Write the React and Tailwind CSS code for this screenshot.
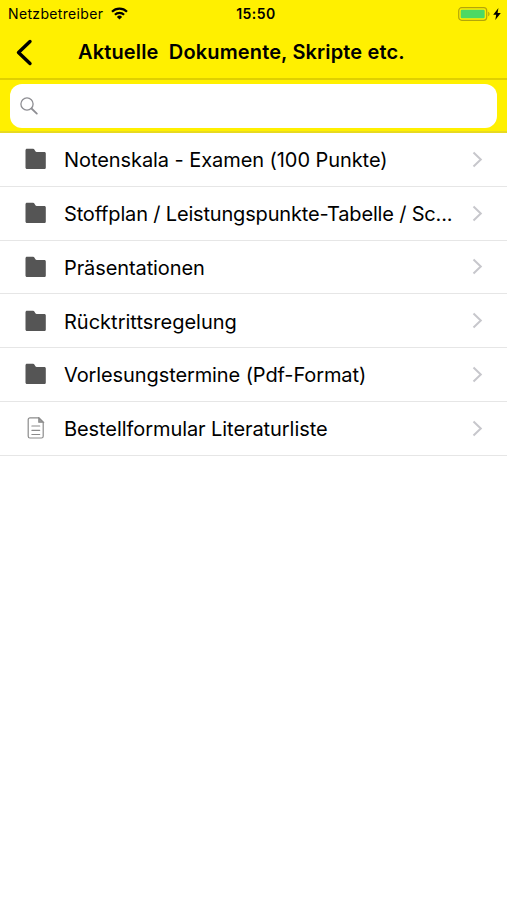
import React from 'react';

const entries = [
  { id: 1, type: 'folder', title: 'Notenskala - Examen (100 Punkte)', tracking: 'tracking-[-0.07px]' },
  { id: 2, type: 'folder', title: 'Stoffplan / Leistungspunkte-Tabelle / Sc...', tracking: 'tracking-[-0.17px]' },
  { id: 3, type: 'folder', title: 'Präsentationen', tracking: 'tracking-[-0.1px]' },
  { id: 4, type: 'folder', title: 'Rücktrittsregelung', tracking: 'tracking-[0px]' },
  { id: 5, type: 'folder', title: 'Vorlesungstermine (Pdf-Format)', tracking: 'tracking-[-0.1px]' },
  { id: 6, type: 'file', title: 'Bestellformular Literaturliste', tracking: 'tracking-[-0.07px]' },
];

function FolderIcon() {
  return (
    <svg width="22" height="22" viewBox="0 0 22 22" fill="#555555">
      <path d="M2 .8h6c.7 0 1.200.3 1.500.9l.9 1.500c.3.500.7.700 1.300.700h7.600c1 0 1.500.600 1.500 1.500v14c0 1-.6 1.500-1.500 1.500H2c-1 0-1.500-.6-1.500-1.500V2.300C.5 1.400 1.100.8 2 .8z" />
    </svg>
  );
}

function FileIcon() {
  return (
    <svg width="22" height="22" viewBox="0 0 22 22" fill="none" stroke="#8b8b8b" strokeWidth="1.2">
      <path d="M5 .8h8.800l4.400 4.400v14c0 1-.8 1.800-1.800 1.800H5c-1 0-1.800-.8-1.800-1.800V2.600c0-1 .8-1.800 1.800-1.800z" />
      <path d="M13.800 .8v4.400h4.400z" fill="#a0a0a0" />
      <path d="M6.900 9h7.800M6.900 13.300h7.800M6.900 17.500h7.800" strokeLinecap="round" />
    </svg>
  );
}

function StatusBar() {
  return (
    <div className="grid h-[27px] grid-cols-3 items-center pl-[8px] pr-[6px]">
      <div className="flex items-center gap-[8px]">
        <span className="pt-px text-[14px] leading-none tracking-[0.34px]">Netzbetreiber</span>
        <svg width="17" height="13" viewBox="0 0 17 13" fill="none" stroke="#000" strokeWidth="2.2">
          <path d="M1 4.700a10.800 10.800 0 0 1 15 0" />
          <path d="M3.900 7.700a6.600 6.600 0 0 1 9.200 0" />
          <path d="M8.500 12.500L5.900 9.900a3.700 3.700 0 0 1 5.200 0z" fill="#000" stroke="none" />
        </svg>
      </div>
      <span className="pl-[3px] pt-px text-center text-[14px] font-semibold leading-none tracking-[0.5px]">15:50</span>
      <div className="flex items-center justify-end gap-[3px]">
        <svg width="32" height="14" viewBox="0 0 32 14">
          <rect x=".7" y=".7" width="28" height="12.600" rx="3" fill="none" stroke="#b3a60a" strokeWidth="1.200" />
          <rect x="2.700" y="2.700" width="24" height="8.600" rx="1.200" fill="#4cd964" />
          <path d="M30.200 4.700c1.800.7 1.800 3.900 0 4.600z" fill="#b3a60a" />
        </svg>
        <svg width="8" height="12" viewBox="0 0 8 12" fill="#000">
          <path d="M5.400 0L.2 6.800h3L2.300 12l5.500-7H4.600z" />
        </svg>
      </div>
    </div>
  );
}

export default function App() {
  return (
    <div className="h-[900px] w-[507px] overflow-hidden bg-white font-['Inter',sans-serif] text-black">
      <header className="h-[80px] border-b-2 border-[#e0d000] bg-[#fff000]">
        <StatusBar />
        <div className="flex h-[51px] items-center pl-[16px]">
          <svg width="17" height="27" viewBox="0 0 17 27" fill="none" stroke="#000" strokeWidth="3.400" strokeLinecap="round" strokeLinejoin="round">
            <path d="M14 2.500L2.500 13.500 14 24.500" />
          </svg>
          <h1 className="ml-[45px] whitespace-pre pb-[2px] text-[20px] font-semibold leading-none tracking-[0.14px]">Aktuelle  Dokumente, Skripte etc.</h1>
        </div>
      </header>

      <div className="h-[53px] border-b-2 border-[#e8da20] bg-[#fff000] px-[10px] pt-[4px]">
        <div className="flex h-[44px] items-center rounded-[12px] bg-white pl-[10px]">
          <svg width="18" height="18" viewBox="0 0 18 18" fill="none" stroke="#8e8e93" strokeLinecap="round">
            <circle cx="7" cy="7" r="6.100" strokeWidth="1.300" />
            <path d="M11.500 11.500L16.800 16.600" strokeWidth="1.800" />
          </svg>
        </div>
      </div>

      <ul>
        {entries.map((entry) => (
          <li key={entry.id} className="flex h-[53.75px] items-center border-b border-[#e6e6e6] pl-[25px] pr-[24px]">
            {entry.type === 'folder' ? <FolderIcon /> : <FileIcon />}
            <span className={`ml-[17px] flex-1 whitespace-nowrap pt-[2px] text-[20px] leading-none ${entry.tracking}`}>{entry.title}</span>
            <svg width="11" height="17" viewBox="0 0 11 17" fill="none" stroke="#c7c7cc" strokeWidth="2">
              <path d="M1.500 1.500L8.800 8.500 1.500 15.500" />
            </svg>
          </li>
        ))}
      </ul>
    </div>
  );
}
